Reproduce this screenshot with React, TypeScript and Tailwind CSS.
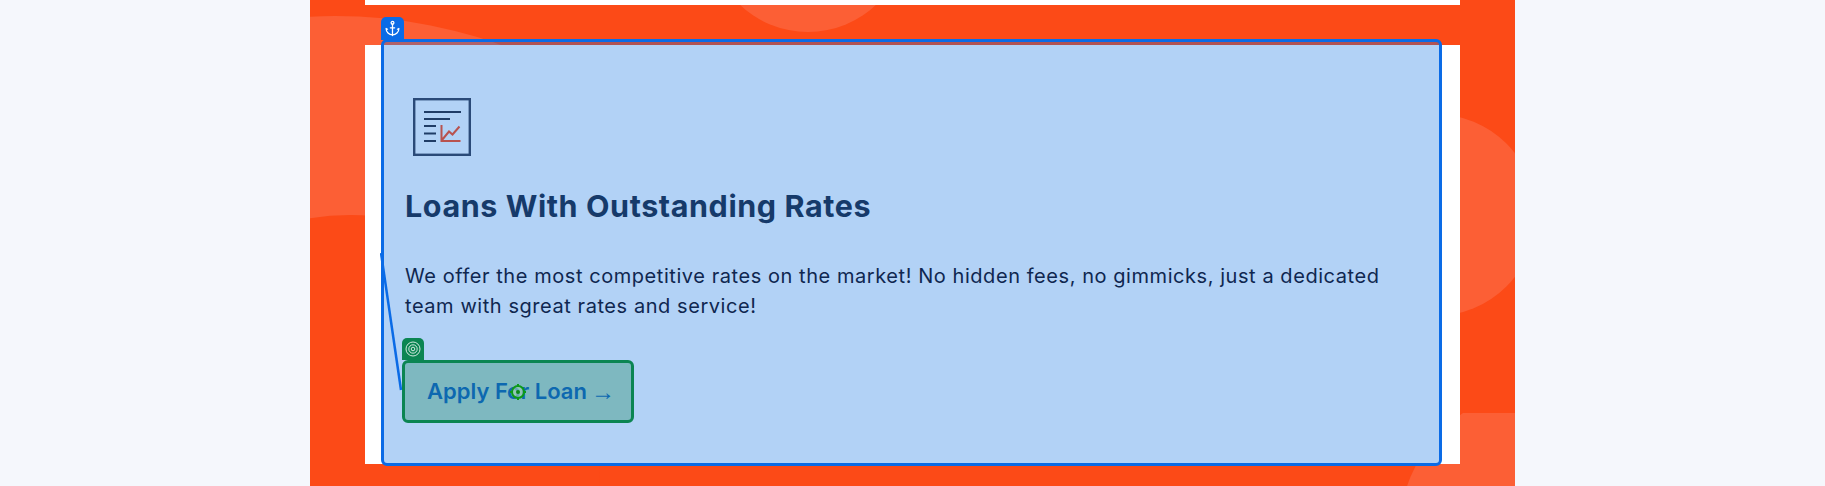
import React from "react";
import { Anchor } from "lucide-react";

function ReportIcon() {
  return (
    <svg width="58" height="58" viewBox="0 0 58 58" fill="none" className="block">
      <rect x="1.200" y="1.200" width="55.600" height="55.600" stroke="#2a4a78" strokeWidth="2.400" />
      <path d="M11 14h37M11 21h26M11 28h12M11 35.500h12M11 43h12" stroke="#1f3c66" strokeWidth="2" />
      <path d="M28.500 27v16h19M29 42l7-8.500 3.500 3 7-8" stroke="#b8524f" strokeWidth="2" />
    </svg>
  );
}

function TargetIcon() {
  return (
    <svg width="16" height="16" viewBox="0 0 16 16" fill="none" className="block">
      <circle cx="8" cy="8" r="7" stroke="#fff" strokeOpacity="0.8" strokeWidth="1" />
      <circle cx="8" cy="8" r="4.200" stroke="#fff" strokeOpacity="0.8" strokeWidth="1" />
      <circle cx="8" cy="8" r="1.800" stroke="#fff" strokeOpacity="0.8" strokeWidth="1" />
    </svg>
  );
}

function Crosshair() {
  return (
    <svg width="18" height="18" viewBox="0 0 18 18" fill="none" className="block">
      <circle cx="9" cy="9" r="6" stroke="#0d9a18" strokeWidth="2" fill="#9fd0b0" fillOpacity="0.6" />
      <circle cx="9" cy="9" r="2" fill="#0d8a18" />
      <path d="M9 1v2.500M9 14.500v2.500M1 9h2.500M14.500 9h2.500" stroke="#0d9a18" strokeWidth="2" />
    </svg>
  );
}

export default function App() {
  return (
    <div className="flex h-[486px] justify-center overflow-hidden bg-[#f5f7fc] font-['Inter','Liberation_Sans',sans-serif]">
      <div className="relative h-[486px] w-[1205px] shrink-0 overflow-hidden bg-[#fc4a17]">
        {/* decorative shapes */}
        <div className="absolute inset-x-0 top-0 h-[240px] overflow-hidden">
          <div className="absolute left-[-465px] top-[16px] h-[980px] w-[980px] rounded-full bg-[#fc5f35]" />
        </div>
        <div className="absolute left-[-210px] top-[215px] h-[500px] w-[500px] rounded-full bg-[#fc4a17]" />
        <div className="absolute left-[399px] top-[-166px] h-[198px] w-[198px] rounded-full bg-[#fc5f35]" />
        <div className="absolute left-[1024px] top-[114px] h-[202px] w-[202px] rounded-full bg-[#fc5f35]" />
        <div className="absolute inset-x-0 bottom-0 top-[413px] overflow-hidden">
          <div className="absolute left-[1090px] top-[-23px] h-[280px] w-[280px] rounded-full bg-[#fc5f35]" />
        </div>

        <div className="relative mx-[55px] h-[5px] bg-white" />

        <section className="relative mx-[55px] mt-[40px] h-[419px] bg-white">
          {/* inspector overlay */}
          <div className="absolute left-[16px] top-[-6px] h-[427px] w-[1061px] rounded-[6px] border-[3px] border-[#0a6be6] bg-[rgba(0,106,225,0.3)]">
            <div className="absolute bottom-[calc(100%+2px)] left-[-3px] flex h-[23px] w-[23px] items-center justify-center rounded-t-[5px] bg-[#0a6be6] text-white">
              <Anchor size={17} strokeWidth={1.8} />
            </div>
            <svg width="24" height="140" viewBox="0 0 24 140" fill="none" className="absolute left-[-4px] top-[210px]">
              <path d="M1 1 21 138" stroke="#0a6be6" strokeWidth="2.500" />
            </svg>
          </div>

          <div className="relative flex flex-col items-start pl-[40px] pt-[53px]">
            <div className="ml-[8px]">
              <ReportIcon />
            </div>
            <h2 className="mt-[30px] text-[30.500px] font-bold leading-[40px] tracking-[0.58px] text-[#163a6a]">
              Loans With Outstanding Rates
            </h2>
            <p className="mt-[35px] w-[1000px] text-[20px] font-normal leading-[30px] tracking-[0.56px] text-[#0f2750]">
              We offer the most competitive rates on the market! No hidden fees, no gimmicks, just a dedicated team with sgreat rates and service!
            </p>
            <a className="relative ml-[-3px] mt-[39px] flex h-[63px] w-[232px] items-center rounded-[6px] border-[3px] border-[#0b8552] bg-[rgba(8,125,65,0.3)] pl-[22px] text-[22px] font-semibold text-[#0d68b0]">
              Apply For Loan
              <span className="ml-[4px] font-['Liberation_Serif',serif] text-[24px] font-normal">→</span>
              <span className="absolute bottom-[calc(100%+3px)] left-[-3px] flex h-[22px] w-[22px] items-center justify-center rounded-t-[5px] bg-[#0b8552]">
                <TargetIcon />
              </span>
              <span className="absolute left-1/2 top-1/2 -translate-x-1/2 -translate-y-1/2">
                <Crosshair />
              </span>
            </a>
          </div>
        </section>
      </div>
    </div>
  );
}
